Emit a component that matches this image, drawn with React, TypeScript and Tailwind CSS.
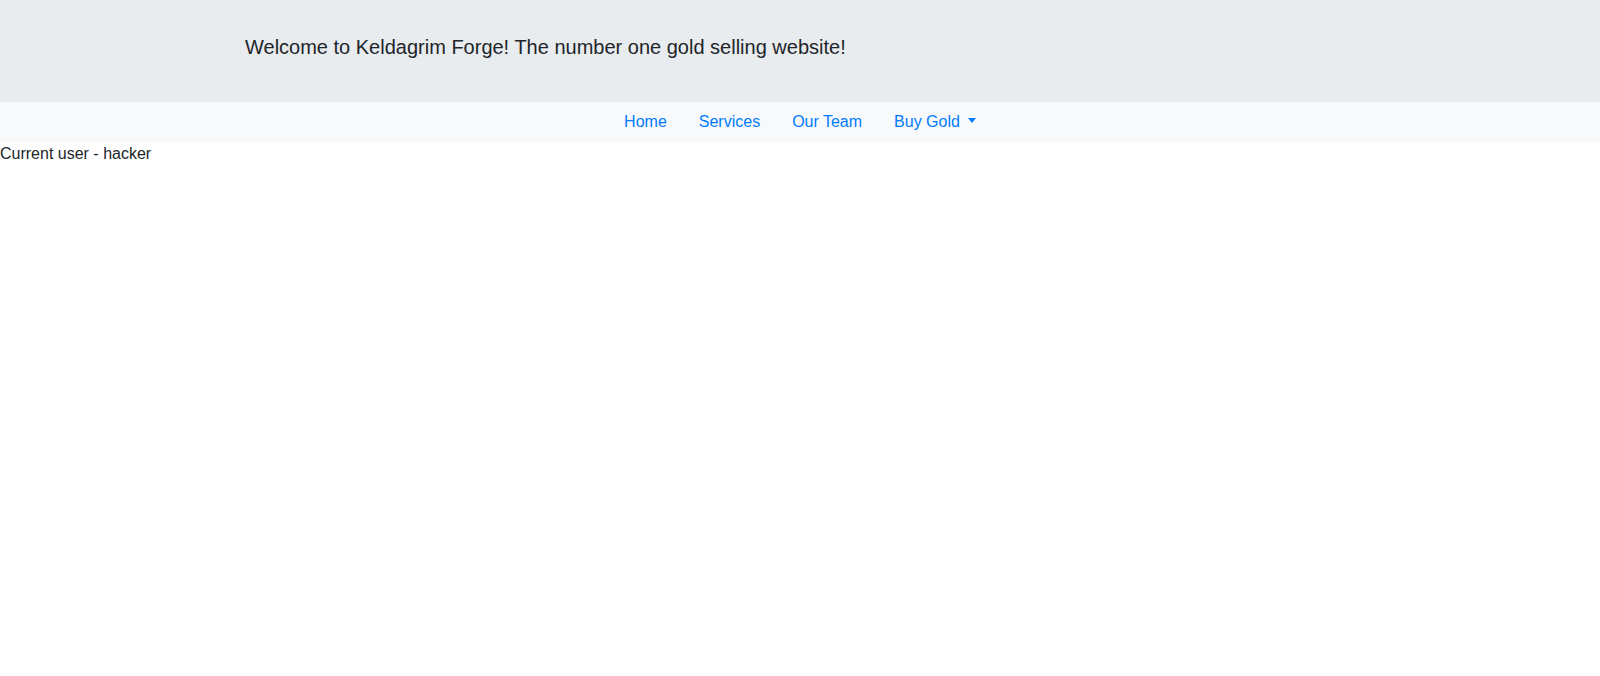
export default function App() {
  return (
    <main className="min-h-screen bg-white font-['Liberation_Sans',Arial,sans-serif] text-[#212529]">
      <header className="h-[102px] bg-[#e9ecef] pt-8">
        <div className="mx-auto w-[1140px] px-[15px]">
          <p className="text-[20px] leading-[30px]">
            Welcome to Keldagrim Forge! The number one gold selling website!
          </p>
        </div>
      </header>
      <nav className="flex h-10 justify-center bg-[#f8f9fa] text-base leading-6 text-[#007bff]">
        <a className="px-4 py-2" href="#">Home</a>
        <a className="px-4 py-2" href="#">Services</a>
        <a className="px-4 py-2" href="#">Our Team</a>
        <a className="flex items-center px-4 py-2" href="#">
          Buy Gold
          <span className="mb-[4px] ml-[8px] h-0 w-0 border-x-[4px] border-t-[5px] border-x-transparent border-t-[#007bff]" />
        </a>
      </nav>
      <div className="text-base leading-6">Current user - hacker</div>
    </main>
  );
}
